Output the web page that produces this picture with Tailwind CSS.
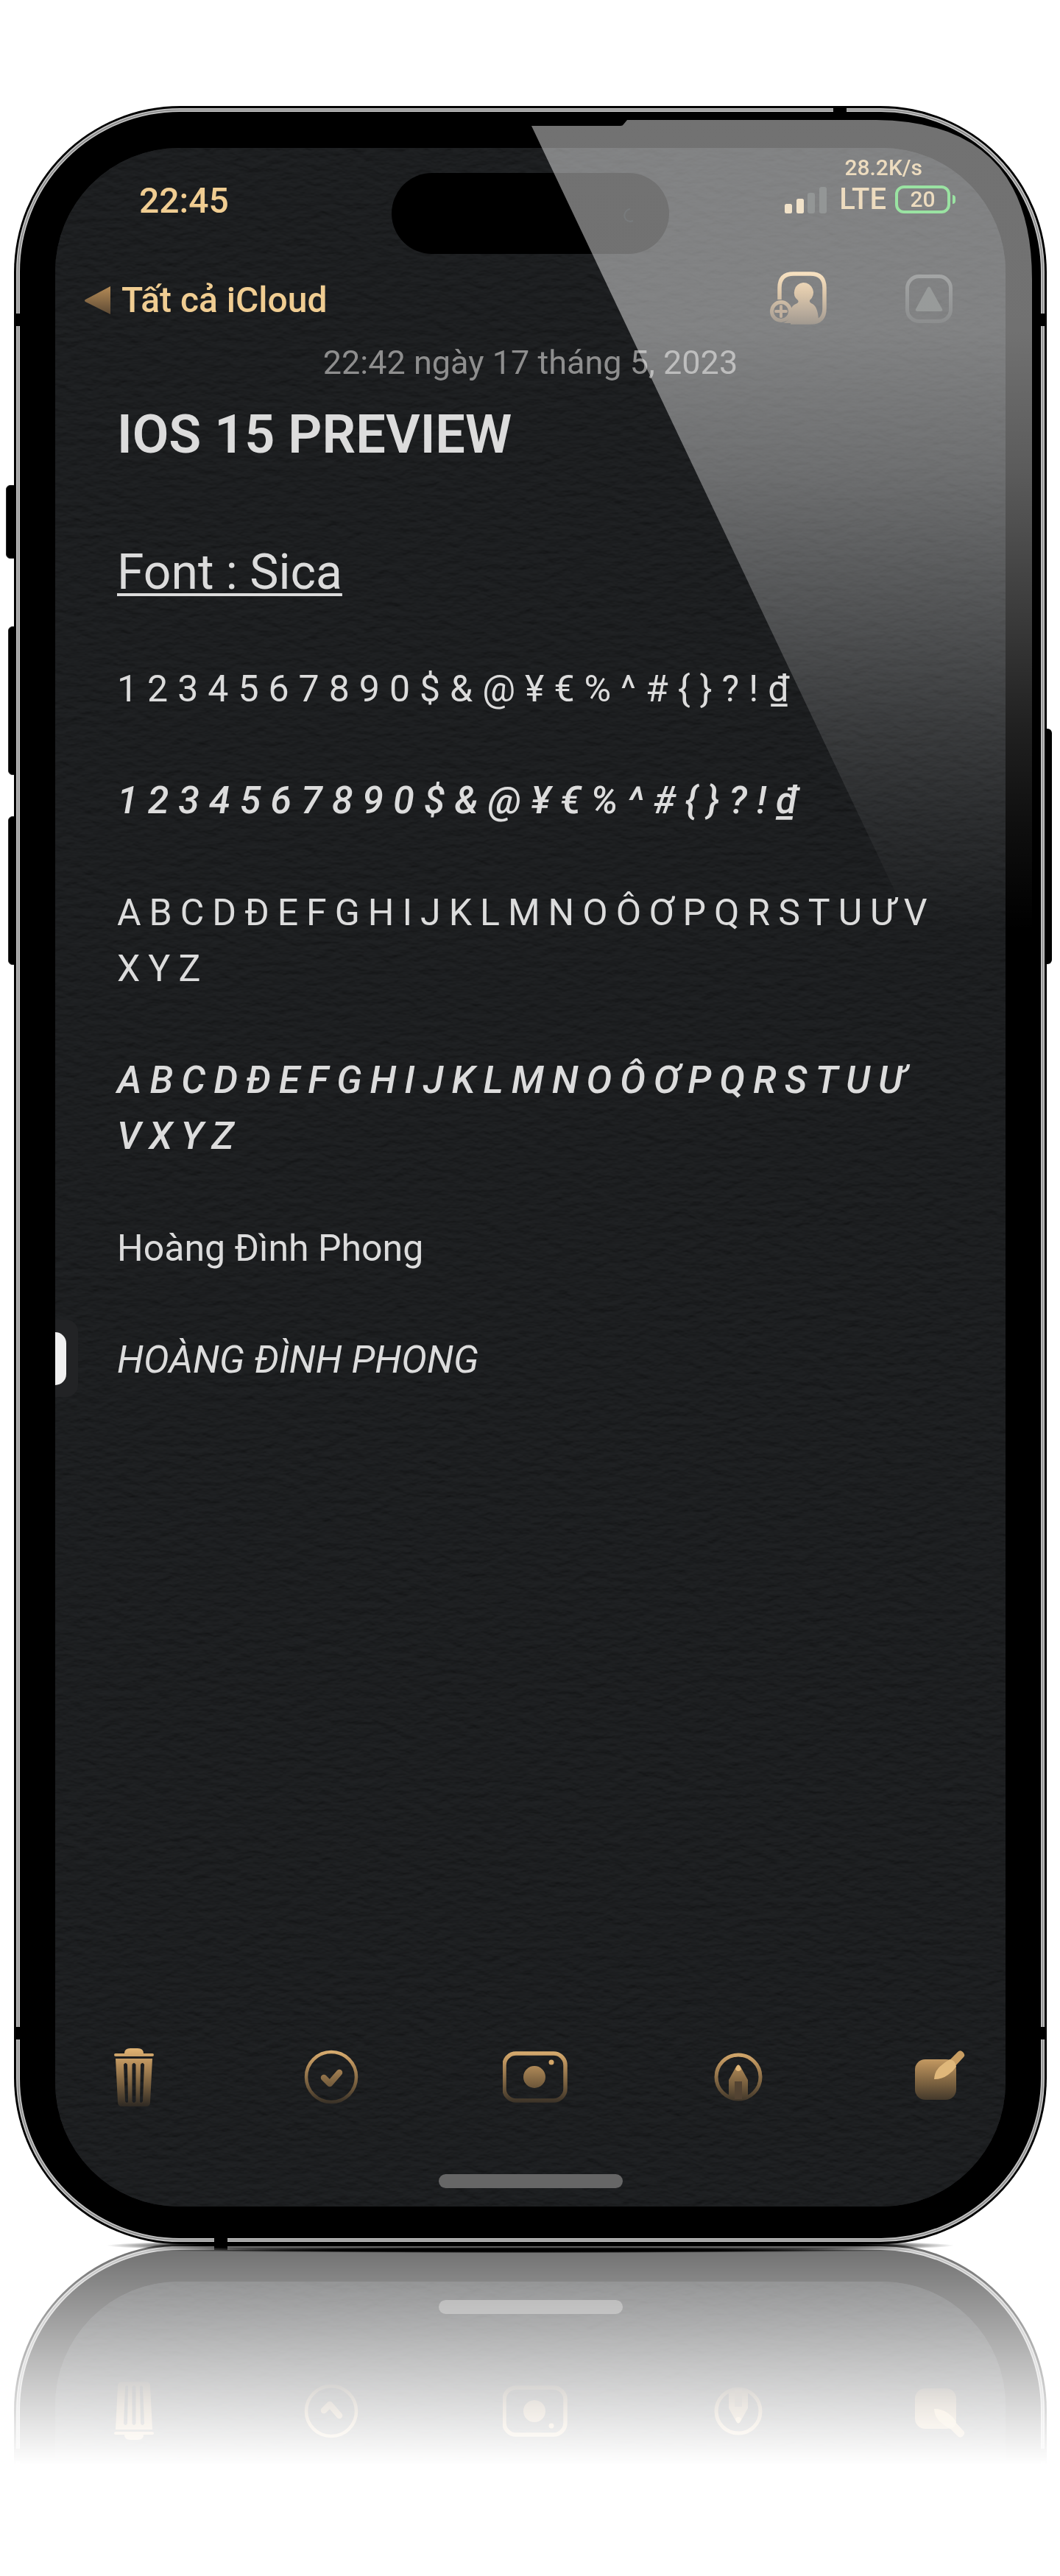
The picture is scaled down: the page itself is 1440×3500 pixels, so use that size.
<!DOCTYPE html>
<html lang="vi">
<head>
<meta charset="utf-8">
<meta name="viewport" content="width=device-width, initial-scale=1">
<title>IOS 15 PREVIEW</title>
<script src="https://cdn.jsdelivr.net/npm/@tailwindcss/browser@4"></script>
</head>
<body class="bg-white font-[Roboto,sans-serif] text-[#dcdcdc]">

<!-- Shared paints and the leather texture -->
<svg class="absolute size-0" aria-hidden="true">
  <defs>
    <linearGradient id="gold" gradientUnits="userSpaceOnUse" x1="0" y1="2" x2="0" y2="80">
      <stop offset="0" stop-color="#dfb273"/>
      <stop offset=".25" stop-color="#b78f5b"/>
      <stop offset=".6" stop-color="#79603f"/>
      <stop offset="1" stop-color="#2e2923"/>
    </linearGradient>
    <linearGradient id="goldNav" x1="0" y1="0" x2="0" y2="1">
      <stop offset="0" stop-color="#b58b56"/>
      <stop offset="1" stop-color="#5d4a35"/>
    </linearGradient>
    <linearGradient id="goldHead" gradientUnits="userSpaceOnUse" x1="0" y1="2" x2="0" y2="74">
      <stop offset="0" stop-color="#f5cd92"/>
      <stop offset=".4" stop-color="#c39c68"/>
      <stop offset=".75" stop-color="#846b4e"/>
      <stop offset="1" stop-color="#564837"/>
    </linearGradient>
    <linearGradient id="steel" gradientUnits="userSpaceOnUse" x1="0" y1="4" x2="0" y2="72">
      <stop offset="0" stop-color="#5c5f5f"/>
      <stop offset="1" stop-color="#303334"/>
    </linearGradient>
    <filter id="leather" x="0" y="0" width="100%" height="100%" color-interpolation-filters="sRGB">
      <feTurbulence type="fractalNoise" baseFrequency=".05 .1" numOctaves="3" seed="4"/>
      <feDiffuseLighting surfaceScale="1.5" diffuseConstant="1" lighting-color="#202224">
        <feDistantLight azimuth="270" elevation="62"/>
      </feDiffuseLighting>
    </filter>
  </defs>
</svg>

<div class="relative pt-36 pr-[18px] pb-[451px] pl-[19px]">
  <div class="relative">
    <!-- Shadow on the ground -->
    <div class="absolute -bottom-3 left-[9%] right-[9%] h-5 bg-[radial-gradient(closest-side,#000_78%,transparent)]"></div>

    <!-- Side buttons -->
    <div class="absolute top-[515px] -left-[11px] h-[100px] w-4 rounded-md border border-[#2a2a2a] bg-black"></div>
    <div class="absolute top-[707px] -left-2 h-[202px] w-4 rounded-md border border-[#2a2a2a] bg-black"></div>
    <div class="absolute top-[965px] -left-2 h-[202px] w-4 rounded-md border border-[#2a2a2a] bg-black"></div>
    <div class="absolute top-[846px] -right-[7px] h-[320px] w-4 rounded-md bg-black"></div>

    <div class="relative flex aspect-[1403/2905] flex-col rounded-[226px] bg-black px-14 pt-[57px] pb-[51px] [-webkit-box-reflect:below_0_linear-gradient(transparent_calc(100%-300px),rgba(0,0,0,0.57))]">
      <!-- Steel band and antenna gaps -->
      <svg class="absolute inset-0 size-full" viewBox="0 0 1403 2905" preserveAspectRatio="none" fill="none" aria-hidden="true">
        <rect x="5.5" y="5.5" width="1392" height="2894" rx="220" stroke="#c2c2c2" stroke-width="5"/>
        <rect x="5.5" y="5.5" width="1392" height="2894" rx="220" stroke="#8a8a8a" stroke-width="1.5"/>
        <path fill="#000" d="M0 282h9v17H0zM1394 282h9v17h-9zM0 2610h9v17H0zM1394 2610h9v17h-9zM1113 0h18v9h-18zM272 2896h18v9h-18z"/>
      </svg>

      <div class="relative flex flex-1 flex-col overflow-hidden rounded-[168px] bg-[#1c1d1f]">
        <svg class="absolute inset-0 size-full" aria-hidden="true"><rect width="100%" height="100%" filter="url(#leather)"/></svg>

        <!-- Status bar -->
        <header class="relative grid grid-cols-[1fr_377px_1fr] items-start">
          <time class="pt-11 pl-[114px] text-[48px] leading-[56px] font-medium text-[#f0cd92]">22:45</time>
          <div class="mt-[34px] h-[110px] rounded-full bg-black">
            <svg class="ml-[306px] mt-[44px] h-7 w-7" viewBox="0 0 28 28" fill="none" stroke="#0b1013" stroke-width="2" aria-hidden="true"><path d="M18 5a9 9 0 0 0-6 14a9 9 0 0 0 10 2"/></svg>
          </div>
          <div class="flex flex-col items-end gap-2 pt-[11px] pr-[68px] text-[#dfc08c]">
            <span class="mr-[45px] text-[30px] leading-8 font-medium">28.2K/s</span>
            <div class="flex items-center">
              <svg class="h-[38px] w-[58px]" viewBox="0 0 58 38" aria-label="Sóng di động" role="img">
                <rect x="0" y="25" width="10" height="13" rx="2.500" fill="#e6cb9d"/>
                <rect x="16" y="18" width="10" height="20" rx="2.500" fill="#e6cb9d"/>
                <rect x="31" y="10" width="10" height="28" rx="3" fill="#3c4241"/>
                <rect x="47" y="2" width="10" height="36" rx="3" fill="#3c4241"/>
              </svg>
              <span class="mr-3 ml-4 text-[40px] leading-[38px] font-medium">LTE</span>
              <span class="flex h-[38px] w-[75px] items-center justify-center rounded-xl border-4 border-[#49cc57] text-[30px] leading-[30px] font-medium">20</span>
              <span class="ml-[3px] h-3 w-1 rounded-r-full bg-[#49cc57]"></span>
            </div>
          </div>
        </header>

        <!-- Navigation bar -->
        <nav class="relative mt-[22px] flex h-[74px] items-center justify-between pr-[70px] pl-[39px]">
          <a href="#" class="flex items-center gap-3.5 pt-2 text-[48px] leading-[56px] font-medium text-[#f0cd92]">
            <svg class="h-10 w-[37px]" viewBox="0 0 37 40" aria-hidden="true"><path d="M36 1v38L2 22q-2-1.500 0-3z" fill="url(#goldNav)"/></svg>
            Tất cả iCloud
          </a>
          <div class="flex gap-[106px]">
            <button type="button" class="h-[74px] w-[78px]" aria-label="Thêm người">
              <svg class="size-full" viewBox="0 0 78 74" fill="none" aria-hidden="true">
                <path d="M13 40V24Q13 5 32 5h23q19 0 19 19v28q0 19-19 19H28" stroke="url(#goldHead)" stroke-width="5.500"/>
                <path d="M45 17a13.500 13.500 0 0 1 9 24q-1 3 4 5 8 5 8 26H18q12-6 10-18 2-6 7-8t3-5a13.500 13.500 0 0 1 7-24z" fill="url(#goldHead)"/>
                <circle cx="15" cy="56" r="12.500" stroke="url(#goldHead)" stroke-width="5"/>
                <path d="M15 49v14M8 56h14" stroke="#8f7150" stroke-width="4" stroke-linecap="round"/>
              </svg>
            </button>
            <button type="button" class="h-[74px] w-[66px]" aria-label="Chia sẻ">
              <svg class="size-full" viewBox="0 0 66 74" fill="none" aria-hidden="true">
                <rect x="2.500" y="8.500" width="59" height="61" rx="16" stroke="url(#steel)" stroke-width="5"/>
                <path d="M30 24q2-3 4 0l16 29q1 3-2 3H16q-3 0-2-3z" fill="#454a49"/>
              </svg>
            </button>
          </div>
        </nav>

        <!-- Note -->
        <main class="relative mt-[26px] flex flex-1 flex-col pl-[84px] text-[50px] leading-[76px] whitespace-nowrap">
          <p class="mr-[84px] text-center text-[45px] leading-[52px] text-[#8e8e8e]">22:42 ngày 17 tháng 5, 2023</p>
          <h1 class="mt-6 text-[72px] leading-[96px] font-semibold">IOS 15 PREVIEW</h1>
          <h2 class="mt-[95px] text-[66px] leading-[88px] underline decoration-4 underline-offset-6">Font : Sica</h2>
          <div class="mt-[76px] flex flex-col gap-[76px]">
            <p class="tracking-[13px]">1234567890$&amp;@¥€%^#{}?!₫</p>
            <p class="text-[52px] leading-[76px] font-medium tracking-[13px] italic">1234567890$&amp;@¥€%^#{}?!₫</p>
            <p class="tracking-[11px]">ABCDĐEFGHIJKLMNOÔƠPQRSTUƯV<br>XYZ</p>
            <p class="text-[52px] leading-[76px] font-medium tracking-[11px] italic">ABCDĐEFGHIJKLMNOÔƠPQRSTUƯ<br>VXYZ</p>
            <p>Hoàng Đình Phong</p>
            <p class="text-[52px] leading-[76px] italic">HOÀNG ĐÌNH PHONG</p>
          </div>
        </main>

        <!-- Tab peeking in from the screen's edge -->
        <div class="absolute top-[1592px] left-0 flex h-[105px] w-[31px] items-center rounded-r-2xl bg-[#222325]">
          <span class="h-[72px] w-[15px] rounded-r-2xl bg-[#f0f0f0]"></span>
        </div>

        <!-- Toolbar -->
        <footer class="relative">
          <div class="flex justify-between pr-[51px] pl-[67px]">
            <button type="button" class="size-20" aria-label="Xóa">
              <svg class="size-full" viewBox="0 0 80 80" aria-hidden="true">
                <path fill="url(#gold)" d="M27 8q0-7 8-7h10q8 0 8 7h12q2 0 2 2t-2 2H15q-2 0-2-2t2-2z"/>
                <path fill="url(#gold)" fill-rule="evenodd" d="M15 15h50l-3 59q0 6-6 6H24q-6 0-6-6zM26 23l2 50q3 4 4 0l-1-50q-2.500-4-5 0zM37.500 23v50q2.500 4 5 0V23q-2.500-4-5 0zM49 23l-1 50q1 4 4 0l2-50q-2.500-4-5 0z"/>
              </svg>
            </button>
            <button type="button" class="size-20" aria-label="Danh sách kiểm">
              <svg class="size-full" viewBox="0 0 80 80" fill="none" stroke="url(#gold)" aria-hidden="true">
                <circle cx="38" cy="40" r="34" stroke-width="4.500"/>
                <path d="M28 41l8 8 13-15" stroke-width="8.500" stroke-linecap="round" stroke-linejoin="round"/>
              </svg>
            </button>
            <button type="button" class="h-20 w-[92px]" aria-label="Máy ảnh">
              <svg class="size-full" viewBox="0 0 92 80" aria-hidden="true">
                <rect x="2" y="8" width="83" height="64" rx="16" fill="none" stroke="url(#gold)" stroke-width="5.500"/>
                <circle cx="43" cy="40" r="15" fill="url(#gold)"/>
                <circle cx="66" cy="20" r="3.500" fill="#d3a668"/>
              </svg>
            </button>
            <button type="button" class="size-20" aria-label="Vẽ">
              <svg class="size-full" viewBox="2 0 80 80" aria-hidden="true">
                <circle cx="40" cy="40" r="30" fill="none" stroke="url(#gold)" stroke-width="5"/>
                <path fill="url(#gold)" d="M27 69V44l10-18q3-5 6 0l10 18v25q-13 6-26 0z"/>
                <path fill="#534332" d="M35 46h10v24H35z"/>
                <path fill="#dfb577" d="M36 29l2-4q2-3 4 0l2 4q-1 3-4 3t-4-3z"/>
              </svg>
            </button>
            <button type="button" class="size-20" aria-label="Ghi chú mới">
              <svg class="size-full" viewBox="0 0 80 80" aria-hidden="true">
                <rect x="8" y="16" width="56" height="55" rx="14" fill="url(#gold)"/>
                <path fill="#c89d62" d="M54 18L65 7q4-5 8-1t1 7L62 26z"/>
                <path fill="#dfb77a" d="M34 43q1-13 10-19 6-5 11-8 8 1 9 10-4 6-11 11-8 6-19 6z"/>
              </svg>
            </button>
          </div>
          <div class="mx-auto mt-[92px] mb-[25px] h-[19px] w-[250px] rounded-full bg-[#666]"></div>
        </footer>
      </div>

      <!-- Glare across the glass -->
      <svg class="pointer-events-none absolute inset-0 size-full" viewBox="0 0 1403 2905" preserveAspectRatio="none" aria-hidden="true">
        <defs>
          <linearGradient id="glare" gradientUnits="userSpaceOnUse" x1="0" y1="0" x2="0" y2="1120">
            <stop offset="0" stop-color="#fff" stop-opacity=".447"/>
            <stop offset=".27" stop-color="#fff" stop-opacity=".445"/>
            <stop offset=".44" stop-color="#fff" stop-opacity=".36"/>
            <stop offset=".62" stop-color="#fff" stop-opacity=".23"/>
            <stop offset=".75" stop-color="#fff" stop-opacity=".13"/>
            <stop offset=".87" stop-color="#fff" stop-opacity=".06"/>
            <stop offset="1" stop-color="#fff" stop-opacity="0"/>
          </linearGradient>
        </defs>
        <path fill="url(#glare)" d="M703 27h121q3 0 4-2l5-6h338q212 2 212 217v884h-161z"/>
      </svg>
    </div>

    <!-- Contact shadow where the frame meets its reflection -->
    <div class="absolute -bottom-3 left-[12%] right-[12%] h-2 rounded-full bg-[radial-gradient(closest-side,#000_50%,transparent)]"></div>
  </div>
</div>
</body>
</html>
